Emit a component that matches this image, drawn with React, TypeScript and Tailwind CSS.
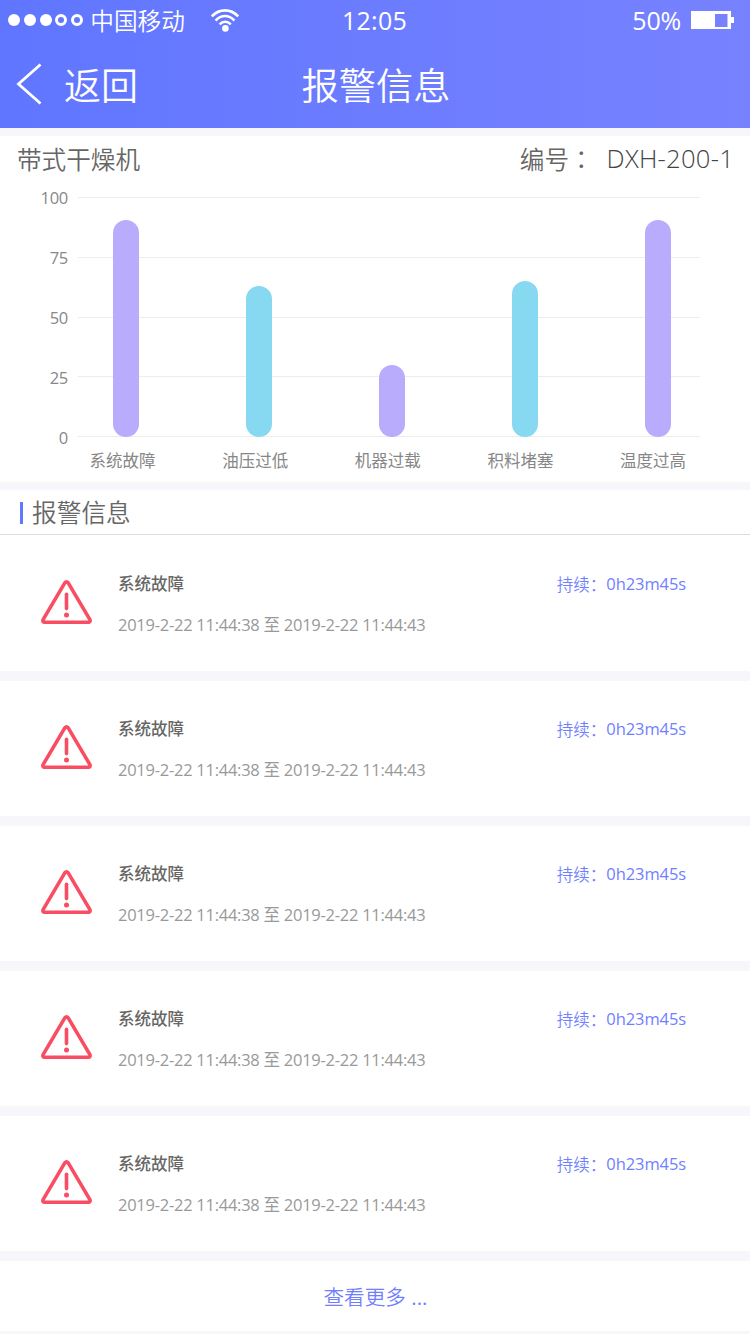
import React from "react";

const bars = [
  { label: "系统故障", height: 217, color: "bg-[#b9acfc]" },
  { label: "油压过低", height: 151, color: "bg-[#86d9f0]" },
  { label: "机器过载", height: 72, color: "bg-[#b9acfc]" },
  { label: "积料堵塞", height: 156, color: "bg-[#86d9f0]" },
  { label: "温度过高", height: 217, color: "bg-[#b9acfc]" },
];

const ticks = [100, 75, 50, 25, 0];

const alarms = [1, 2, 3, 4, 5].map((id) => ({
  id,
  title: "系统故障",
  start: "2019-2-22 11:44:38",
  end: "2019-2-22 11:44:43",
  duration: "0h23m45s",
}));

const WifiIcon = () => (
  <svg width="28" height="23" viewBox="0 0 28 23" fill="none" stroke="white">
    <path d="M.8 7.4C8.3 -.6 19.7 -.6 27.2 7.4" strokeWidth="2.8" />
    <path d="M4.6 11.6C10.2 5.6 17.8 5.6 23.4 11.6" strokeWidth="2.5" />
    <path d="M8.6 15.4C12 11.8 16.4 11.8 19.8 15.4" strokeWidth="2.4" />
    <circle cx="14.4" cy="19.4" r="3.3" fill="white" stroke="none" />
  </svg>
);

const BatteryIcon = () => (
  <svg width="43" height="18" viewBox="0 0 43 18" fill="white">
    <path
      fillRule="evenodd"
      d="M0 0H40V6H43V12H40V18H0ZM24 3V16H36.5V3Z"
    />
  </svg>
);

const WarningIcon = () => (
  <svg width="52" height="45" viewBox="0 0 52 45" fill="none" stroke="#f94d63">
    <path
      d="M24.8 2.9Q26.5 .8 28.2 2.9L49.9 39.6Q50.8 42.2 48.2 42.3H4.8Q2.2 42.2 3.1 39.6Z"
      strokeWidth="3.6"
      strokeLinejoin="round"
    />
    <path d="M26.5 14.2V28.6" strokeWidth="3.6" strokeLinecap="round" />
    <circle cx="26.5" cy="35" r="2.5" fill="#f94d63" stroke="none" />
  </svg>
);

const Header = () => (
  <header className="h-32 bg-gradient-to-r from-[#6076ff] to-[#7782ff] text-white">
    <div className="grid h-10 grid-cols-3 items-center pr-4 pl-2">
      <div className="flex items-center">
        <div className="flex items-center gap-[3.8px]">
          <span className="size-3 rounded-full bg-white" />
          <span className="size-3 rounded-full bg-white" />
          <span className="size-3 rounded-full bg-white" />
          <span className="size-3 rounded-full border-[3px] border-white" />
          <span className="size-3 rounded-full border-[3px] border-white" />
        </div>
        <span className="ml-[7px] pt-[2px] text-[23.7px] leading-[38px] font-[350]">
          中国移动
        </span>
        <span className="ml-[26px]">
          <WifiIcon />
        </span>
      </div>
      <div className="pl-[7px] text-center text-[25px] leading-[38px] tracking-[0.3px]">
        12:05
      </div>
      <div className="flex items-center justify-end gap-[10px]">
        <span className="text-[25px] leading-[38px] tracking-[-0.2px]">50%</span>
        <BatteryIcon />
      </div>
    </div>
    <div className="grid h-[88px] grid-cols-[1fr_auto_1fr] items-center px-4">
      <button className="flex items-center text-left">
        <svg width="26" height="42" viewBox="0 0 26 42" fill="none" stroke="white">
          <path d="M24.5 1.5L2.5 21L24.5 40.5" strokeWidth="2.8" />
        </svg>
        <span className="ml-[22px] pt-[3px] text-[37px] leading-[85px] font-[350]">
          返回
        </span>
      </button>
      <h1 className="pt-[3px] pl-[2px] text-[37.2px] leading-[85px] font-[350]">
        报警信息
      </h1>
    </div>
  </header>
);

const Chart = () => (
  <section className="h-[346px] bg-white">
    <div className="flex h-12 items-center justify-between pr-4 pl-[17px] text-[24.6px] font-[350] text-[#666]">
      <h2>带式干燥机</h2>
      <div className="-mt-[2px] flex">
        <span>
          编号<span className="font-['Noto_Sans_CJK_TC',sans-serif]">：</span>
        </span>
        <span className="ml-[13px] text-[25.6px] font-light tracking-[0.25px] text-[#444]">
          DXH-200-1
        </span>
      </div>
    </div>
    <div className="flex pr-[50px]">
      <div className="flex w-[68px] flex-col text-right text-[16.5px] tracking-[-0.3px] text-[#888]">
        {ticks.map((tick) => (
          <span key={tick} className="h-[60px] leading-[28px]">
            {tick}
          </span>
        ))}
      </div>
      <div className="ml-[10px] grid h-[253px] flex-1 pt-[13px]">
        <div className="col-start-1 row-start-1 flex flex-col justify-between">
          {ticks.map((tick) => (
            <div key={tick} className="h-px bg-[#ededed]" />
          ))}
        </div>
        <div className="col-start-1 row-start-1 flex items-end justify-between pr-[29px] pl-[35px]">
          {bars.map((bar) => (
            <div
              key={bar.label}
              className={`w-[26px] rounded-full ${bar.color}`}
              style={{ height: bar.height }}
            />
          ))}
        </div>
      </div>
    </div>
    <div className="-mt-[35px] flex justify-between pr-[64px] pl-[89.5px] text-[16.5px] leading-6 text-[#868686]">
      {bars.map((bar) => (
        <span key={bar.label}>{bar.label}</span>
      ))}
    </div>
  </section>
);

const App = () => {
  return (
    <div className="flex h-[1334px] w-[750px] flex-col overflow-hidden bg-[#f6f6fb] font-['Open_Sans','Noto_Sans_CJK_SC',sans-serif]">
      <Header />
      <main className="flex flex-col gap-2 pt-2">
        <Chart />
        <section>
          <div className="flex h-[45px] items-center border-b border-[#dcdcdc] bg-white pl-5">
            <span className="mt-[2px] h-[22px] w-[3px] bg-[#6078ff]" />
            <h2 className="ml-[9px] pt-px text-[24.7px] leading-[43px] font-[350] text-[#666]">
              报警信息
            </h2>
          </div>
          <ul className="flex flex-col gap-[10px]">
            {alarms.map((alarm) => (
              <li
                key={alarm.id}
                className="flex h-[135px] items-start bg-white pt-[44px] pr-[64px] pl-[40px] first:h-[136px] first:pt-[45px]"
              >
                <WarningIcon />
                <div className="-mt-[8px] ml-[26px] flex-1">
                  <h3 className="text-[16.5px] leading-6 font-medium text-[#666]">
                    {alarm.title}
                  </h3>
                  <p className="mt-[17px] text-[16.5px] leading-6 tracking-[-0.26px] text-[#999]">
                    {alarm.start} 至 {alarm.end}
                  </p>
                </div>
                <span className="-mt-[8px] flex text-[16.5px] leading-6 text-[#717fff]">
                  <span className="pt-px font-[350]">持续：</span>
                  <span className="tracking-[-0.1px]">{alarm.duration}</span>
                </span>
              </li>
            ))}
          </ul>
          <button className="mt-[10px] h-[70px] w-full bg-white pt-[2px] pl-px text-[20.6px] text-[#717fff]">
            <span className="font-[350]">查看更多</span> ...
          </button>
        </section>
      </main>
    </div>
  );
};

export default App;
